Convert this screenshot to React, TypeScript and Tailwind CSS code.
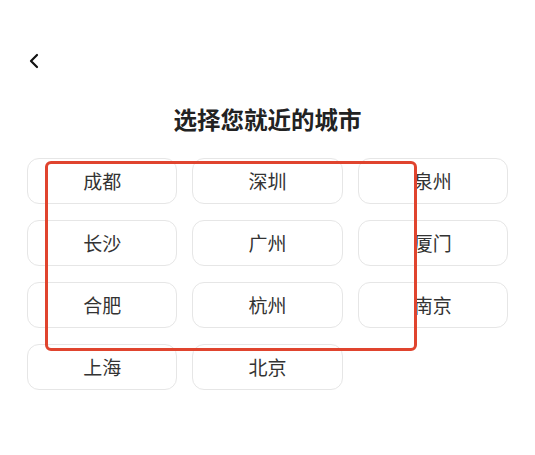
import { ChevronLeft } from 'lucide-react';

const cities = ['成都', '深圳', '泉州', '长沙', '广州', '厦门', '合肥', '杭州', '南京', '上海', '北京'];

export default function App() {
  return (
    <div className="relative w-[535px] h-[455px] bg-white overflow-hidden" style={{ fontFamily: '"Noto Sans CJK SC", "Noto Sans", sans-serif' }}>
      <div className="pt-[49px] pl-[22px] h-[84px]">
        <ChevronLeft className="w-[24px] h-[24px] text-[#111]" strokeWidth={2.2} />
      </div>
      <h1 className="text-center text-[23.5px] font-bold text-[#222] leading-[32px] mt-[19px]">选择您就近的城市</h1>
      <div className="grid grid-cols-3 gap-x-[15px] gap-y-[16px] px-[27px] mt-[23px]">
        {cities.map((c) => (
          <button key={c} className="h-[46px] rounded-[12px] border border-[#e6e6e6] bg-white text-[19px] text-[#333]">
            {c}
          </button>
        ))}
      </div>
      <div className="absolute left-[45px] top-[161px] w-[372px] h-[190px] border-[3.5px] border-[#e0442e] rounded-[6px] pointer-events-none" />
    </div>
  );
}
